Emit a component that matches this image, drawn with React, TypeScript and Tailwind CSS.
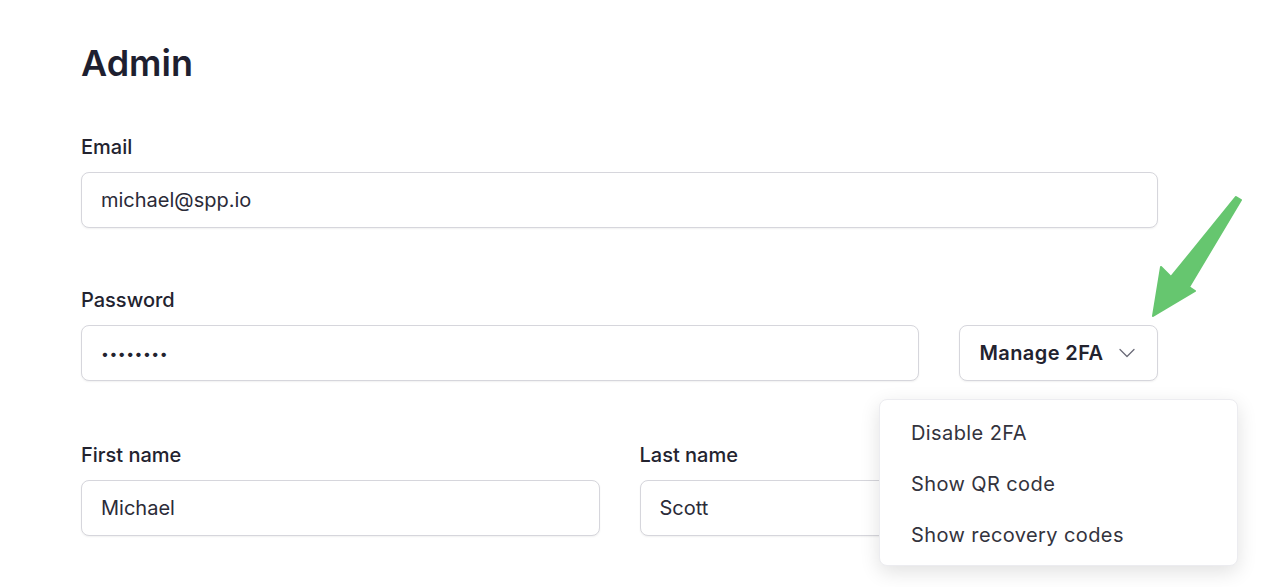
import { ChevronDown } from "lucide-react";

const font = { fontFamily: "Inter, 'Noto Sans', sans-serif" };

function Field({ label, value, className = "" }: { label: string; value: string; className?: string }) {
  return (
    <div className={`flex flex-col ${className}`}>
      <label className="text-[20px] leading-[28px] font-medium text-[#23232f]">{label}</label>
      <div className="mt-[11px] flex h-[56px] items-center rounded-lg border border-[#d6d6dc] bg-white px-[19px] text-[20px] text-[#2b2b38] shadow-[0_1px_2px_rgba(0,0,0,0.06)]">
        {value}
      </div>
    </div>
  );
}

export default function App() {
  return (
    <div className="relative h-[587px] w-[1280px] overflow-hidden bg-white" style={font}>
      <div className="w-[1077px] pl-[81px] pt-[43px] box-content">
        <h1 className="text-[36px] leading-[40px] font-semibold text-[#1e1f30]">Admin</h1>

        <Field label="Email" value="michael@spp.io" className="mt-[50px]" />

        <div className="mt-[58px] flex flex-col">
          <label className="text-[20px] leading-[28px] font-medium text-[#23232f]">Password</label>
          <div className="mt-[11px] flex gap-10">
            <div className="flex h-[56px] flex-1 items-center rounded-lg border border-[#d6d6dc] bg-white px-[19px] text-[14px] tracking-[0.5px] text-[#23232f] shadow-[0_1px_2px_rgba(0,0,0,0.06)]">
              ••••••••
            </div>
            <button className="flex h-[56px] w-[199px] items-center justify-center gap-[14px] rounded-lg border border-[#d6d6dc] bg-white pl-1 text-[20px] font-semibold tracking-[0.4px] text-[#23232f] shadow-[0_1px_2px_rgba(0,0,0,0.06)]">
              Manage 2FA
              <ChevronDown className="h-7 w-7 -ml-1 text-[#6b6b78]" strokeWidth={1.1} />
            </button>
          </div>
        </div>

        <div className="mt-[60px] grid grid-cols-2 gap-10">
          <Field label="First name" value="Michael" />
          <Field label="Last name" value="Scott" />
        </div>
      </div>

      {/* dropdown menu */}
      <div className="absolute left-[879px] top-[399px] w-[359px] rounded-lg border border-[#ececf0] bg-white pt-[7px] pb-[5px] shadow-[0_6px_20px_rgba(0,0,0,0.12)]">
        {["Disable 2FA", "Show QR code", "Show recovery codes"].map((item) => (
          <div key={item} className="flex h-[51px] items-center pl-[31px] text-[20px] tracking-[0.4px] text-[#33333d]">
            {item}
          </div>
        ))}
      </div>

      {/* annotation arrow */}
      <svg className="absolute left-0 top-0" width="1280" height="587" viewBox="0 0 1280 587">
        <path
          d="M1236 197 L1241 200 L1189 287 L1195 291 L1153 316 L1161 267 L1171 277 Z"
          fill="#66c66f"
          stroke="#66c66f"
          strokeWidth="2"
          strokeLinejoin="round"
        />
      </svg>
    </div>
  );
}
